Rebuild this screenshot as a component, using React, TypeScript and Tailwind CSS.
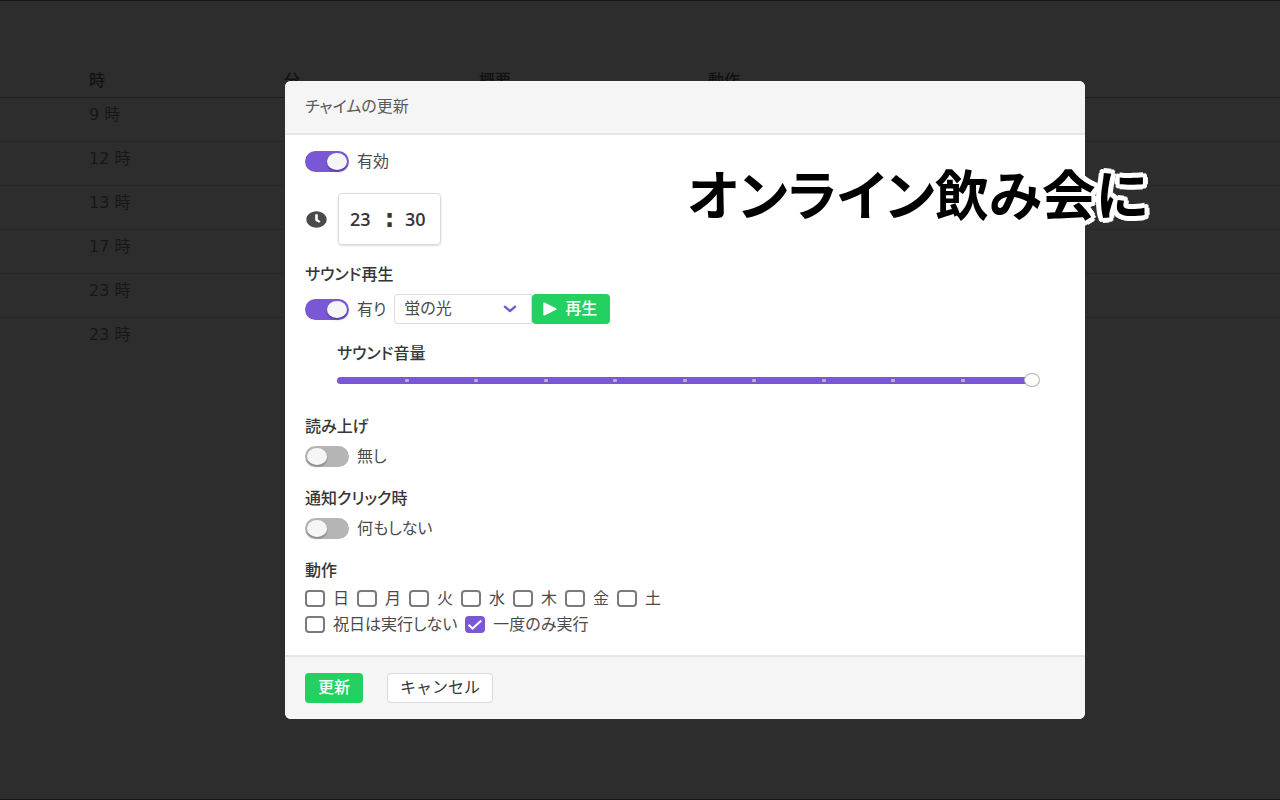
import React, { useState } from 'react';
import { FaClock } from 'react-icons/fa';

const days = ['日', '月', '火', '水', '木', '金', '土'];
const hours = [9, 12, 13, 17, 23, 23];
const ticks = [1, 2, 3, 4, 5, 6, 7, 8, 9];

const Toggle = ({ label, initial }: { label: string; initial: boolean }) => {
    const [on, setOn] = useState(initial);
    return (
        <label className="flex items-center gap-2 text-[#4a4a4a]">
            <input
                type="checkbox"
                role="switch"
                checked={on}
                onChange={e => setOn(e.target.checked)}
                className="h-[21px] w-11 shrink-0 appearance-none rounded-full bg-[#b5b5b5] p-[2px] before:block before:h-[17px] before:w-5 before:rounded-[50%] before:bg-[#f5f5f5] before:shadow-[0_2px_2px_rgba(0,0,0,0.25)] checked:bg-[#7957d5] checked:before:ml-5"
            />
            <span className="pt-px leading-5">{label}</span>
        </label>
    );
};

const Check = ({ label, initial = false }: { label: string; initial?: boolean }) => {
    const [on, setOn] = useState(initial);
    return (
        <label className="flex items-center gap-2 leading-5 text-[#4a4a4a]">
            <span className="relative flex h-[17px] w-5 shrink-0">
                <input
                    type="checkbox"
                    checked={on}
                    onChange={e => setOn(e.target.checked)}
                    className="h-full w-full appearance-none rounded-[4px] border-2 border-[#7a7a7a] bg-white checked:border-[#7957d5] checked:bg-[#7957d5]"
                />
                {on && (
                    <svg viewBox="0 0 20 17" className="pointer-events-none absolute inset-0" fill="none" stroke="#fff" strokeWidth="2">
                        <path d="M3.5 8.8 L7.6 12.6 L16.3 4.6" />
                    </svg>
                )}
            </span>
            <span className="pt-px">{label}</span>
        </label>
    );
};

const Heading = ({ children }: { children: React.ReactNode }) => (
    <h2 className="text-base leading-5 font-medium text-[#363636]">{children}</h2>
);

const ScheduleTable = () => (
    <table className="w-full table-fixed border-collapse text-left">
        <thead>
            <tr className="h-[35px] border-b border-[#202020] align-bottom text-[#121212]">
                <th className="w-[89px]"></th>
                <th className="w-[195px] pb-1 font-medium">時</th>
                <th className="w-[195px] pb-1 font-medium">分</th>
                <th className="w-[229px] pb-1 font-medium">概要</th>
                <th className="pb-1 font-medium">動作</th>
            </tr>
        </thead>
        <tbody>
            {hours.map((h, i) => (
                <tr key={i} className="h-11 border-b border-[#272727] align-top text-[#171717] last:border-b-0">
                    <td></td>
                    <td className="pt-[5px] leading-6">{h} 時</td>
                    <td></td>
                    <td></td>
                    <td></td>
                </tr>
            ))}
        </tbody>
    </table>
);

const ChimeDialog = () => {
    const [hour, setHour] = useState('23');
    const [minute, setMinute] = useState('30');
    const [volume, setVolume] = useState(10);

    return (
        <div role="dialog" aria-label="チャイムの更新" className="w-full max-w-[800px] overflow-hidden rounded-md bg-white">
            <header className="border-b-2 border-[#e6e6e6] bg-[#f5f5f5] px-5 py-4">
                <h1 className="text-base leading-5 font-normal text-[#5a5a5a]">チャイムの更新</h1>
            </header>

            <section className="px-5 pt-4 pb-5">
                <Toggle label="有効" initial={true} />

                <div className="mt-[21px] flex items-center">
                    <div className="flex w-[33px]">
                        <FaClock preserveAspectRatio="none" className="ml-px h-[17px] w-[21px] text-[#4a4a4a]" />
                    </div>
                    <div className="flex h-[52px] w-[103px] items-center justify-between rounded-[4px] border border-[#dbdbdb] px-[11px] font-['Open_Sans',sans-serif] text-lg font-semibold text-[#363636] shadow-[0_1px_2px_rgba(10,10,10,0.15)]">
                        <input aria-label="時" value={hour} onChange={e => setHour(e.target.value)} className="w-6" />
                        <span className="font-['DejaVu_Sans',sans-serif] text-2xl leading-6 font-bold">:</span>
                        <input aria-label="分" value={minute} onChange={e => setMinute(e.target.value)} className="w-6" />
                    </div>
                </div>

                <div className="mt-5">
                    <Heading>サウンド再生</Heading>
                </div>
                <div className="mt-[9px] flex items-center">
                    <Toggle label="有り" initial={true} />
                    <div className="relative ml-2 w-[138px]">
                        <select aria-label="サウンド" className="h-[30px] w-full appearance-none rounded-l-[4px] border border-[#dbdbdb] bg-white px-[9px] text-[#4a4a4a]">
                            <option>蛍の光</option>
                        </select>
                        <svg viewBox="0 0 14 8" className="pointer-events-none absolute top-[11px] right-[15px] h-2 w-[14px]" fill="none" stroke="#7957d5" strokeWidth="2.4" strokeLinejoin="round">
                            <path d="M1.2 1.2 L7 6 L12.8 1.2" />
                        </svg>
                    </div>
                    <button className="flex h-[30px] w-[78px] items-center gap-2 rounded-[4px] bg-[#23d160] pl-[11px] font-medium text-white">
                        <svg viewBox="0 0 14 14" className="h-[14px] w-[14px]" fill="#fff">
                            <path d="M0.3 1.2 Q0.3 0 1.6 0.6 L13 6.2 Q14.4 7 13 7.8 L1.6 13.4 Q0.3 14 0.3 12.8 Z" />
                        </svg>
                        再生
                    </button>
                </div>

                <div className="mt-5 mr-[33px] ml-8">
                    <Heading>サウンド音量</Heading>
                    <div className="relative mt-[9px] flex h-[14px] items-center">
                        <div className="flex h-[7px] w-full items-center justify-evenly rounded-full bg-[#7957d5]">
                            {ticks.map(t => (
                                <span key={t} className="-mx-[2px] h-[3px] w-1 rounded-[1px] bg-[#b5b5b5]"></span>
                            ))}
                        </div>
                        <input
                            type="range"
                            aria-label="サウンド音量"
                            min={0}
                            max={10}
                            value={volume}
                            onChange={e => setVolume(Number(e.target.value))}
                            className="absolute inset-y-0 -right-2 -left-2 appearance-none bg-transparent [&::-webkit-slider-thumb]:h-[14px] [&::-webkit-slider-thumb]:w-4 [&::-webkit-slider-thumb]:appearance-none [&::-webkit-slider-thumb]:rounded-[50%] [&::-webkit-slider-thumb]:border [&::-webkit-slider-thumb]:border-[#b5b5b5] [&::-webkit-slider-thumb]:bg-white"
                        />
                    </div>
                </div>

                <div className="mt-[30px] flex flex-col gap-[9px]">
                    <Heading>読み上げ</Heading>
                    <Toggle label="無し" initial={false} />
                </div>

                <div className="mt-[22px] flex flex-col gap-[9px]">
                    <Heading>通知クリック時</Heading>
                    <Toggle label="何もしない" initial={false} />
                </div>

                <div className="mt-[22px]">
                    <Heading>動作</Heading>
                    <div className="mt-[7px] flex gap-2">
                        {days.map(d => <Check key={d} label={d} />)}
                    </div>
                    <div className="mt-[5px] flex gap-2">
                        <Check label="祝日は実行しない" />
                        <Check label="一度のみ実行" initial={true} />
                    </div>
                </div>
            </section>

            <footer className="flex gap-6 border-t-2 border-[#e6e6e6] bg-[#f5f5f5] px-5 py-4">
                <button className="h-[30px] w-[58px] rounded-[4px] bg-[#23d160] font-medium text-white">更新</button>
                <button className="h-[30px] w-[106px] rounded-[4px] border border-[#dbdbdb] bg-white text-[#363636] [font-feature-settings:normal]">キャンセル</button>
            </footer>
        </div>
    );
};

const App: React.FC = () => {
    return (
        <main className="relative min-h-screen border-y border-[#141414] bg-[#2d2d2d] pt-[61px] font-['DejaVu_Sans','Noto_Sans_CJK_JP',sans-serif] text-base [font-feature-settings:'palt']">
            <ScheduleTable />

            <div className="absolute inset-0 flex items-center justify-center pl-[90px]">
                <ChimeDialog />
            </div>

            {/* white outline built from shadows so the corners stay round */}
            <p className="pointer-events-none absolute top-[153px] right-[132px] text-[54px] leading-[88px] font-bold whitespace-nowrap text-black [text-shadow:5px_0_#fff,-5px_0_#fff,0_5px_#fff,0_-5px_#fff,4px_3px_#fff,-4px_3px_#fff,4px_-3px_#fff,-4px_-3px_#fff,3px_4px_#fff,-3px_4px_#fff,3px_-4px_#fff,-3px_-4px_#fff]">
                オンライン飲み会に
            </p>
        </main>
    );
};

export default App;
